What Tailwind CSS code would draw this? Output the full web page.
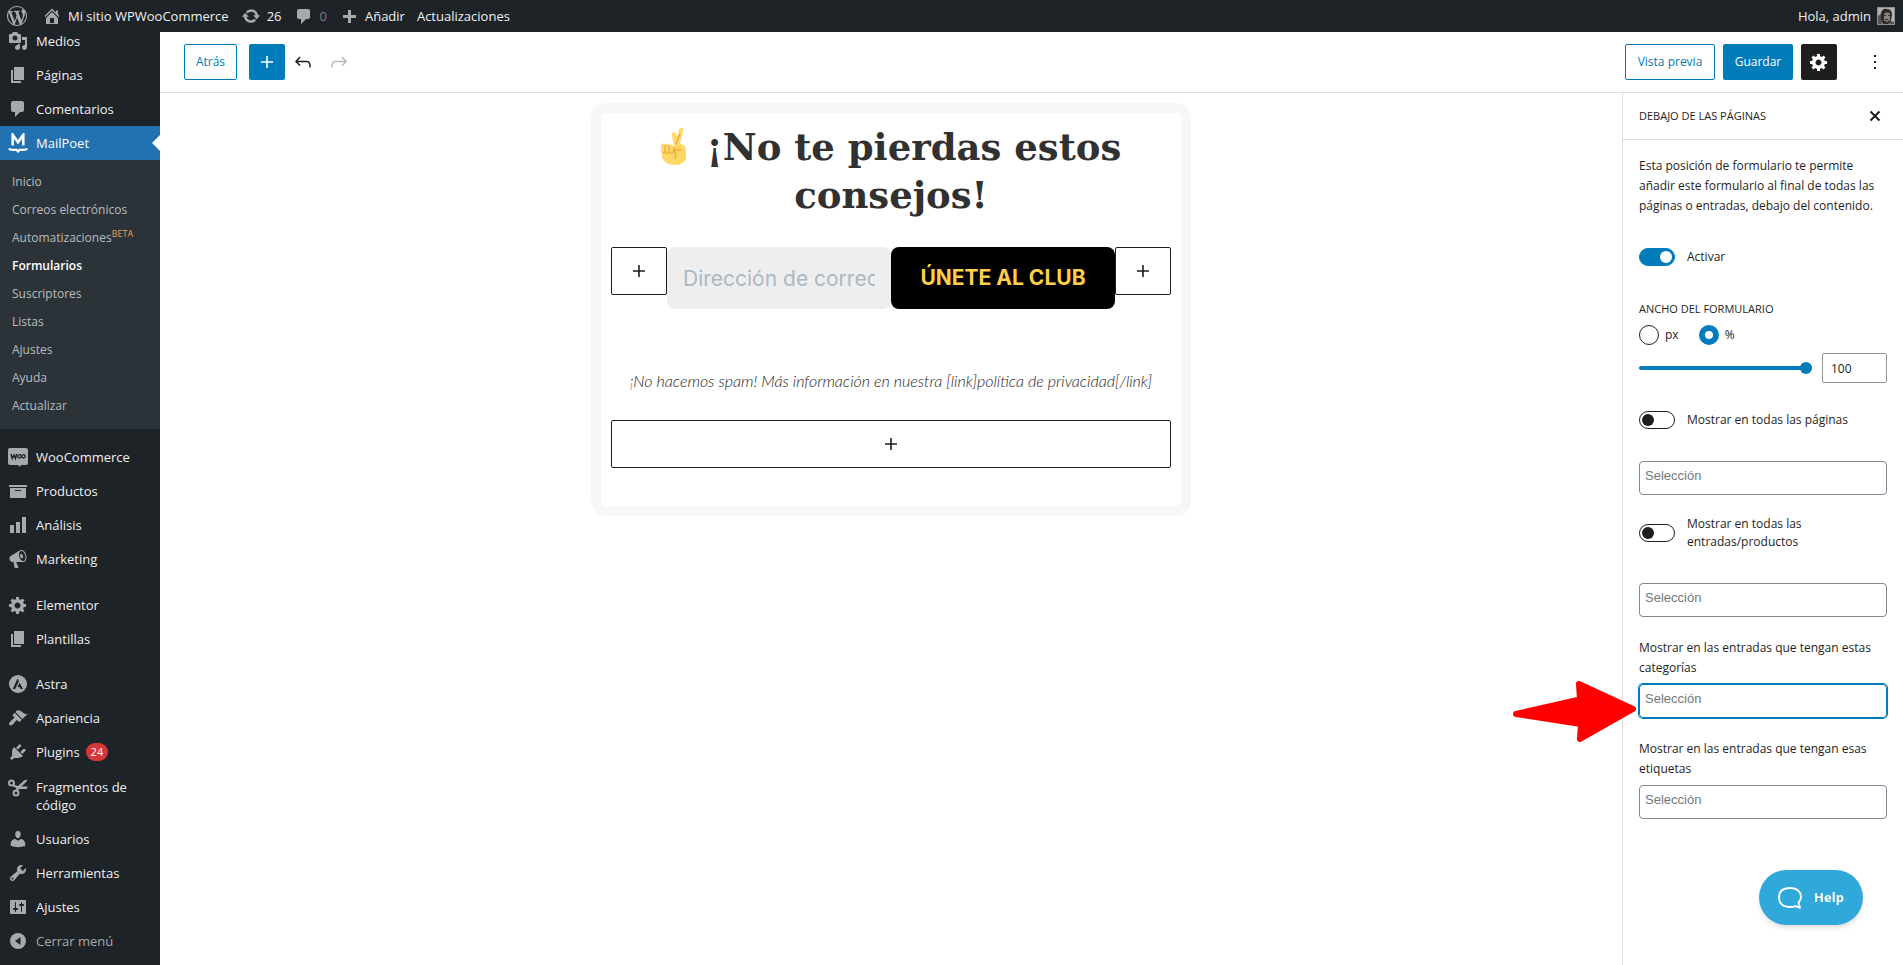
<!DOCTYPE html>
<html lang="es">
<head>
  <meta charset="UTF-8">
  <title>Formularios - MailPoet</title>
  <meta name="viewport" content="width=device-width, initial-scale=1">
  <script src="https://cdn.jsdelivr.net/npm/@tailwindcss/browser@4"></script>
</head>

<body class="h-screen flex flex-col overflow-hidden bg-white text-[#1e1e1e] text-[13px] font-['Open_Sans','Noto_Sans',sans-serif]">
  <!-- Admin bar -->
  <header class="relative z-20 h-8 shrink-0 flex items-center justify-between bg-[#1d2327] text-[#f0f0f1] pl-[7px] pr-2 leading-8">
    <nav class="flex items-center">
      <a href="#" aria-label="Acerca de WordPress" class="mr-[15px]"><svg class="size-5 fill-[#a7aaad]" viewBox="0 0 20 20"><path d="M20 10c0-5.51-4.49-10-10-10C4.48 0 0 4.49 0 10c0 5.52 4.48 10 10 10 5.51 0 10-4.48 10-10zM7.78 15.37L4.37 6.22c.55-.02 1.17-.08 1.17-.08.5-.06.44-1.13-.06-1.11 0 0-1.45.11-2.37.11-.18 0-.37 0-.58-.01C4.12 2.69 6.87 1.11 10 1.11c2.33 0 4.45.87 6.05 2.34-.68-.11-1.65.39-1.65 1.58 0 .74.45 1.36.9 2.1.35.61.55 1.36.55 2.46 0 1.49-1.4 5-1.4 5l-3.03-8.37c.54-.02.82-.17.82-.17.5-.05.44-1.25-.06-1.22 0 0-1.44.12-2.38.12-.87 0-2.33-.12-2.33-.12-.5-.03-.56 1.2-.06 1.22l.92.08 1.26 3.41zM17.41 10c.24-.64.74-1.87.43-4.25.7 1.29 1.05 2.71 1.05 4.25 0 3.29-1.73 6.24-4.4 7.78.97-2.59 1.94-5.2 2.92-7.78zM6.1 18.09C3.12 16.65 1.11 13.53 1.11 10c0-1.3.23-2.48.72-3.59C3.25 10.3 4.67 14.2 6.1 18.09zm4.03-6.63l2.58 6.98c-.86.29-1.76.45-2.71.45-.79 0-1.57-.11-2.29-.33.81-2.38 1.62-4.74 2.42-7.1z"/></svg></a>
      <a href="#" class="flex items-center gap-[6px] mr-3"><svg class="size-5 fill-[#a7aaad]" viewBox="0 0 20 20"><path d="M16 8.5l1.53 1.53-1.06 1.06L10 4.6l-6.47 6.49-1.06-1.06L10 2.5l4 4v-2h2v4zm-6-2.46l6 5.99V18H4v-5.97zM12 17v-5H8v5h4z"/></svg>Mi sitio WPWooCommerce</a>
      <a href="#" class="flex items-center gap-[6px] mr-3"><svg class="size-5 fill-[#a7aaad]" viewBox="0 0 20 20"><path d="M10.2 3.28c3.53 0 6.43 2.61 6.92 6h2.08l-3.5 4-3.5-4h2.32c-.45-1.97-2.21-3.45-4.32-3.45-1.45 0-2.73.71-3.54 1.78L4.95 5.66C6.23 4.2 8.11 3.28 10.2 3.28zm-.4 13.44c-3.52 0-6.43-2.61-6.92-6H.8l3.5-4c1.17 1.33 2.33 2.67 3.5 4H5.48c.45 1.97 2.21 3.45 4.32 3.45 1.45 0 2.73-.71 3.54-1.78l1.71 1.95c-1.28 1.46-3.15 2.38-5.25 2.38z"/></svg>26</a>
      <a href="#" class="flex items-center gap-[6px] mr-3 text-[#7b7f83]"><svg class="size-5 fill-[#a7aaad]" viewBox="0 0 20 20"><path d="M5 3h9c1.100 0 2 .9 2 2v6c0 1.100-.9 2-2 2h-2l-5 5v-5H5c-1.100 0-2-.9-2-2V5c0-1.100.9-2 2-2z"/></svg>0</a>
      <a href="#" class="flex items-center gap-[6px] mr-3"><svg class="size-5 fill-[#a7aaad]" viewBox="0 0 20 20"><path d="M17 9v3h-5v5H9v-5H4V9h5V4h3v5h5z"/></svg>Añadir</a>
      <a href="#">Actualizaciones</a>
    </nav>
    <a href="#" class="flex items-center gap-[6px]">Hola, admin
      <svg class="size-[18px]" viewBox="0 0 18 18"><path fill="#8c8f94" d="M0 0h18v18H0z"/><path fill="#b4b4b4" d="M1 1h16v16H1z"/><path fill="#555" d="M1 9l4-3v11H1zm11 4l5 2v2h-7z"/><path fill="#2b2b2b" d="M4 7c0-4 3-6 6-5 4 0 5 3 5 6l-1 5-3 4H6L4 12z"/><path fill="#858585" d="M7 7c2-2 5-2 6 0v5c-1 3-4 4-6 1z"/><path fill="#333" d="M7 8h2v1H7zm4 0h2v1h-2zM8 12h3v1H8z"/></svg>
    </a>
  </header>

  <div class="flex flex-1 min-h-0">
    <!-- Admin menu -->
    <nav class="w-40 shrink-0 -mt-2 bg-[#1d2327] text-[#f0f0f1] leading-[18px]">
      <a href="#" class="flex items-center gap-2 h-[34px] px-2"><svg class="size-5 fill-[#a7aaad]" viewBox="0 0 20 20"><path d="M13 11V4c0-.55-.45-1-1-1h-1.67L9 1H5L3.67 3H2c-.55 0-1 .45-1 1v7c0 .55.45 1 1 1h10c.55 0 1-.45 1-1zM7 4.5c1.380 0 2.500 1.120 2.500 2.500S8.380 9.500 7 9.500 4.500 8.380 4.500 7 5.620 4.500 7 4.500zM14 6h5v10.500c0 1.380-1.120 2.500-2.500 2.500S14 17.880 14 16.500s1.120-2.500 2.500-2.500c.17 0 .34.02.5.05V9h-3V6zm-4 8.050V13h2v3.500c0 1.380-1.120 2.500-2.500 2.500S7 17.880 7 16.500 8.120 14 9.500 14c.17 0 .34.02.5.05z"/></svg>Medios</a>
      <a href="#" class="flex items-center gap-2 h-[34px] px-2"><svg class="size-5 fill-[#a7aaad]" viewBox="0 0 20 20"><path d="M6 15V2h10v13H6zm-1 1h8v2H3V5h2v11z"/></svg>Páginas</a>
      <a href="#" class="flex items-center gap-2 h-[34px] px-2"><svg class="size-5 fill-[#a7aaad]" viewBox="0 0 20 20"><path d="M5 2h9c1.100 0 2 .9 2 2v7c0 1.100-.9 2-2 2h-2l-5 5v-5H5c-1.100 0-2-.9-2-2V4c0-1.100.9-2 2-2z"/></svg>Comentarios</a>
      <a href="#" class="relative flex items-center gap-2 h-[34px] px-2 bg-[#2271b1] text-white"><svg class="size-5" viewBox="0 0 20 20" fill="none" stroke="#fff"><path stroke-width="2.600" d="M4.700 12.500V1.800L10 9.300l5.300-7.500v10.700"/><path stroke-width="2.200" stroke-linecap="round" d="M1.500 16.200c3 1 5.500.4 7 .6L10 18.500l1.500-1.700c1.500-.2 4 .4 7-.6"/></svg>MailPoet
        <svg class="absolute right-0 top-[9px] w-2 h-4 fill-white" viewBox="0 0 8 16"><path d="M8 0v16L0 8z"/></svg>
      </a>
      <div class="flex flex-col pt-2 pb-[9px] bg-[#2c3338] text-[#b9bcbf] text-xs">
        <a href="#" class="px-3 leading-7">Inicio</a>
        <a href="#" class="px-3 leading-7">Correos electrónicos</a>
        <a href="#" class="px-3 leading-7 flex">Automatizaciones<span class="text-[9px] leading-5 text-[#f09b5a]">BETA</span></a>
        <a href="#" class="px-3 leading-7 font-semibold text-white">Formularios</a>
        <a href="#" class="px-3 leading-7">Suscriptores</a>
        <a href="#" class="px-3 leading-7">Listas</a>
        <a href="#" class="px-3 leading-7">Ajustes</a>
        <a href="#" class="px-3 leading-7">Ayuda</a>
        <a href="#" class="px-3 leading-7">Actualizar</a>
      </div>
      <a href="#" class="mt-[11px] flex items-center gap-2 h-[34px] px-2"><svg class="size-5" viewBox="0 0 20 20"><path fill="#a7aaad" d="M2 1h16a2 2 0 0 1 2 2v13a2 2 0 0 1-2 2h-5l-1 2-2-2H2a2 2 0 0 1-2-2V3a2 2 0 0 1 2-2z"/><path fill="none" stroke="#1d2327" stroke-width="1.400" d="M3 7l1.300 4.500L6 8l1.500 3.500L8.700 7"/><circle cx="11.500" cy="9.300" r="1.700" fill="none" stroke="#1d2327" stroke-width="1.300"/><circle cx="15.500" cy="9.300" r="1.700" fill="none" stroke="#1d2327" stroke-width="1.300"/></svg>WooCommerce</a>
      <a href="#" class="flex items-center gap-2 h-[34px] px-2"><svg class="size-5 fill-[#a7aaad]" viewBox="0 0 20 20"><path d="M19 4v2H1V4h18zM2 7h16v10H2V7zm11 3V9H7v1h6z"/></svg>Productos</a>
      <a href="#" class="flex items-center gap-2 h-[34px] px-2"><svg class="size-5 fill-[#a7aaad]" viewBox="0 0 20 20"><path d="M18 18V2h-4v16h4zm-6 0V7H8v11h4zm-6 0v-8H2v8h4z"/></svg>Análisis</a>
      <a href="#" class="flex items-center gap-2 h-[34px] px-2"><svg class="size-5 fill-[#a7aaad]" viewBox="0 0 20 20"><path d="M18.150 5.940c.46 1.620.38 3.220-.02 4.480-.42 1.280-1.260 2.180-2.300 2.480-.16.06-.26.06-.4.06-.06.02-.12.02-.18.02-.06.02-.14.02-.22.02h-6.800l2.220 5.500c.02.14-.06.26-.14.34-.08.1-.24.16-.34.16H6.950c-.1 0-.26-.06-.34-.16-.08-.08-.16-.2-.14-.34l-1-5.500H4.250l-.02-.02c-.5.06-1.080-.18-1.540-.62s-.88-1.080-1.060-1.880c-.24-.8-.2-1.560-.02-2.200.18-.62.58-1.080 1.060-1.300l.02-.02 9-5.400c.1-.06.18-.1.24-.16.06-.04.14-.08.24-.12.16-.08.28-.12.5-.18 1.040-.3 2.240.1 3.220.98s1.840 2.240 2.260 3.860zm-2.580 5.980h-.02c.4-.1.74-.34 1.040-.7.58-.7.86-1.760.86-3.040 0-.64-.1-1.300-.28-1.980-.34-1.360-1.020-2.500-1.780-3.240s-1.680-1.100-2.460-.88c-.82.22-1.400.96-1.700 2-.32 1.040-.28 2.360.06 3.720.38 1.360 1 2.500 1.800 3.240.78.74 1.620 1.100 2.480.88zm-2.540-7.080c.22-.04.42-.02.62.04.38.16.76.48 1.020 1s.42 1.200.42 1.780c0 .3-.04.56-.12.8-.18.48-.44.84-.86.94-.34.1-.8-.06-1.140-.4s-.64-.86-.78-1.500c-.18-.62-.12-1.240.02-1.720s.48-.84.82-.94z"/></svg>Marketing</a>
      <a href="#" class="mt-3 flex items-center gap-2 h-[34px] px-2"><svg class="size-5 fill-[#a7aaad]" viewBox="0 0 20 20"><path d="M18 12h-2.180c-.17.7-.44 1.350-.81 1.930l1.540 1.540-2.100 2.100-1.540-1.540c-.58.36-1.230.63-1.910.79V19H8v-2.180c-.68-.16-1.330-.43-1.910-.79l-1.540 1.540-2.120-2.120 1.540-1.540c-.36-.58-.63-1.230-.79-1.910H1V9.030h2.170c.16-.7.44-1.350.8-1.940L2.430 5.550l2.100-2.100 1.540 1.540c.58-.37 1.240-.64 1.930-.81V2h3v2.180c.68.16 1.330.43 1.910.79l1.540-1.540 2.120 2.120-1.540 1.540c.36.59.64 1.240.8 1.940H18V12zm-8.500 1.500c1.660 0 3-1.340 3-3s-1.340-3-3-3-3 1.340-3 3 1.340 3 3 3z"/></svg>Elementor</a>
      <a href="#" class="flex items-center gap-2 h-[34px] px-2"><svg class="size-5 fill-[#a7aaad]" viewBox="0 0 20 20"><path d="M6 15V2h10v13H6zm-1 1h8v2H3V5h2v11z"/></svg>Plantillas</a>
      <a href="#" class="mt-[11px] flex items-center gap-2 h-[34px] px-2"><svg class="size-5" viewBox="0 0 20 20"><circle cx="10" cy="10" r="9" fill="#a7aaad"/><path fill="#1d2327" d="M9.500 4.500l1.400 2.800L7.200 15H4.700zM11.600 8.700L15 15h-2.500l-1-2h-2z"/></svg>Astra</a>
      <a href="#" class="flex items-center gap-2 h-[34px] px-2"><svg class="size-5 fill-[#a7aaad]" viewBox="0 0 20 20"><path d="M14.480 11.060L7.410 3.990l1.500-1.500c.5-.56 2.300-.47 3.510.32 1.210.8 1.430 1.280 2.910 2.100 1.180.64 2.450 1.260 4.450.85zm-.71.71L6.700 4.700 4.930 6.470c-.39.39-.39 1.020 0 1.410l1.060 1.060c.39.39.39 1.030 0 1.420-.6.6-1.430 1.110-2.210 1.690-.35.26-.7.53-1.010.84C1.430 14.230.4 16.080 1.400 17.070c.99 1 2.840-.03 4.180-1.360.31-.31.58-.66.85-1.020.57-.78 1.080-1.610 1.690-2.210.39-.39 1.020-.39 1.410 0l1.060 1.060c.39.39 1.020.39 1.410 0z"/></svg>Apariencia</a>
      <a href="#" class="flex items-center gap-2 h-[34px] px-2"><svg class="size-5 fill-[#a7aaad]" viewBox="0 0 20 20"><path d="M13.110 4.360L9.870 7.600 8 5.730l3.240-3.240c.35-.34 1.050-.2 1.560.32.52.51.66 1.210.31 1.550zm-8 1.770l.91-1.120 9.010 9.010-1.190.84c-.71.71-2.630 1.160-3.820 1.160H6.140L4.900 17.260c-.59.59-1.540.59-2.120 0-.59-.58-.59-1.530 0-2.120l1.240-1.240v-3.880c0-1.130.4-3.190 1.090-3.890zm7.260 3.970l3.240-3.240c.34-.35 1.040-.21 1.550.31.52.51.66 1.210.31 1.550l-3.240 3.250z"/></svg>Plugins<span class="-ml-[2px] px-[5px] rounded-full bg-[#d63638] text-white text-[11px]">24</span></a>
      <a href="#" class="flex gap-2 h-[53px] px-2 pt-[9px]"><svg class="size-5 shrink-0" viewBox="0 0 20 20"><g fill="none" stroke="#a7aaad" stroke-width="2"><circle cx="3.500" cy="5" r="2.500"/><circle cx="8" cy="15" r="2.500"/></g><path fill="#a7aaad" d="M5 6.500L10 8l6-5.500c1.500-1 3-1 3.500 0l-6 6H19c1 .5.500 2.500-1 2.500h-7l-1.500 2.500-2-.8L8.500 10 5 8.500z"/></svg>Fragmentos de código</a>
      <a href="#" class="flex items-center gap-2 h-[34px] px-2"><svg class="size-5 fill-[#a7aaad]" viewBox="0 0 20 20"><path d="M10 9.250c-2.270 0-2.730-3.440-2.730-3.440C7 4.020 7.820 2 9.970 2c2.160 0 2.980 2.020 2.710 3.810 0 0-.41 3.440-2.680 3.440zm0 2.570L12.720 10c2.390 0 4.520 2.330 4.520 4.530v2.490s-3.650 1.130-7.240 1.130c-3.650 0-7.240-1.130-7.240-1.130v-2.490c0-2.250 1.940-4.480 4.470-4.480z"/></svg>Usuarios</a>
      <a href="#" class="flex items-center gap-2 h-[34px] px-2"><svg class="size-5 fill-[#a7aaad]" viewBox="0 0 20 20"><path d="M16.680 9.770c-1.340 1.340-3.300 1.670-4.950.99l-5.410 6.520c-.99.99-2.590.99-3.580 0s-.99-2.590 0-3.570l6.520-5.420c-.68-1.650-.35-3.610.99-4.950 1.280-1.280 3.120-1.620 4.720-1.060l-2.890 2.890 2.820 2.820 2.860-2.870c.53 1.580.18 3.390-1.080 4.650zM3.810 16.210c.4.39 1.040.39 1.430 0 .4-.4.4-1.040 0-1.430-.39-.4-1.030-.4-1.430 0-.39.39-.39 1.030 0 1.430z"/></svg>Herramientas</a>
      <a href="#" class="flex items-center gap-2 h-[34px] px-2"><svg class="size-5 fill-[#a7aaad]" viewBox="0 0 20 20"><path d="M18 16V4c0-.55-.45-1-1-1H3c-.55 0-1 .45-1 1v12c0 .55.45 1 1 1h14c.55 0 1-.45 1-1zM8 11h1c.55 0 1 .45 1 1s-.45 1-1 1H8v1.500c0 .28-.22.5-.5.5s-.5-.22-.5-.5V13H6c-.55 0-1-.45-1-1s.45-1 1-1h1V5.500c0-.28.22-.5.5-.5s.5.22.5.5V11zm5-2h-1c-.55 0-1-.45-1-1s.45-1 1-1h1V5.500c0-.28.22-.5.5-.5s.5.22.5.5V7h1c.55 0 1 .45 1 1s-.45 1-1 1h-1v5.500c0 .28-.22.5-.5.5s-.5-.22-.5-.5V9z"/></svg>Ajustes</a>
      <button type="button" class="flex items-center gap-2 h-[34px] w-full px-2 text-[#a7aaad]"><svg class="size-5" viewBox="0 0 20 20"><circle cx="10" cy="10" r="8" fill="#a7aaad"/><path fill="#1d2327" d="M12.500 6v8L7 10z"/></svg>Cerrar menú</button>
    </nav>

    <!-- Editor -->
    <div class="flex-1 min-w-0 flex flex-col">
      <div class="h-[61px] shrink-0 flex items-center justify-between border-b border-[#ddd] pl-6 pr-4">
        <div class="flex items-center">
          <button type="button" class="h-9 w-[53px] mr-3 border border-[#007cba] rounded-[2px] text-[#007cba] text-xs">Atrás</button>
          <button type="button" aria-label="Añadir bloque" class="size-9 flex items-center justify-center bg-[#007cba] rounded-[2px]"><svg class="size-6 fill-white" viewBox="0 0 24 24"><path d="M18 11.200h-5.200V6h-1.600v5.200H6v1.600h5.200V18h1.600v-5.200H18z"/></svg></button>
          <button type="button" aria-label="Deshacer" class="size-9 flex items-center justify-center"><svg class="size-6 fill-[#1e1e1e]" viewBox="0 0 24 24"><path d="M18.300 11.700c-.6-.6-1.400-.9-2.300-.9H6.700l2.900-3.300-1.100-1-4.500 5L8.500 16l1-1-2.700-2.700H16c.5 0 .9.2 1.300.5 1 1 1 3.400 1 4.500v.3h1.500v-.2c0-1.500 0-4.300-1.500-5.700z"/></svg></button>
          <button type="button" aria-label="Rehacer" class="size-9 flex items-center justify-center"><svg class="size-6 fill-[#bbb]" viewBox="0 0 24 24"><path d="M15.600 6.500l-1.100 1 2.900 3.300H8c-.9 0-1.700.3-2.300.9-1.400 1.500-1.400 4.200-1.400 5.600v.2h1.500v-.3c0-1.100 0-3.500 1-4.500.3-.3.7-.5 1.300-.5h9.200L14.500 15l1.100 1.100 4.600-4.600-4.600-5z"/></svg></button>
        </div>
        <div class="flex items-center gap-2">
          <button type="button" class="h-9 w-[90px] border border-[#007cba] rounded-[2px] text-[#007cba] text-xs">Vista previa</button>
          <button type="button" class="h-9 w-[70px] bg-[#007cba] rounded-[2px] text-white text-xs font-medium">Guardar</button>
          <button type="button" aria-label="Ajustes" class="size-9 flex items-center justify-center bg-[#1e1e1e] rounded-[2px]"><svg class="size-5 fill-white" viewBox="0 0 20 20"><path d="M18 12h-2.180c-.17.7-.44 1.350-.81 1.930l1.540 1.540-2.100 2.100-1.540-1.540c-.58.36-1.230.63-1.910.79V19H8v-2.180c-.68-.16-1.330-.43-1.910-.79l-1.540 1.540-2.120-2.120 1.540-1.540c-.36-.58-.63-1.230-.79-1.910H1V9.030h2.170c.16-.7.44-1.350.8-1.940L2.430 5.550l2.100-2.100 1.540 1.540c.58-.37 1.240-.64 1.930-.81V2h3v2.180c.68.16 1.330.43 1.910.79l1.540-1.540 2.120 2.120-1.540 1.540c.36.59.64 1.240.8 1.940H18V12zm-8.500 1.500c1.660 0 3-1.340 3-3s-1.340-3-3-3-3 1.340-3 3 1.340 3 3 3z"/></svg></button>
          <button type="button" aria-label="Opciones" class="ml-[18px] size-6"><svg class="size-6 fill-[#1e1e1e]" viewBox="0 0 24 24"><path d="M11 5h2v2h-2zm0 6h2v2h-2zm0 6h2v2h-2z"/></svg></button>
        </div>
      </div>

      <div class="flex flex-1 min-h-0">
        <!-- Form canvas -->
        <main class="flex-1 min-w-0 pt-[10px]">
          <section class="mx-auto w-full max-w-[600px] border-10 border-[#f7f7f7] rounded-[15px] px-[10px] pt-[10px] pb-[38px]">
            <h1 class="text-center text-[#313131] font-bold text-[37px] leading-12 font-['DejaVu_Serif',serif]">
              <svg class="inline-block w-[25px] h-[37px] mr-2 -mt-2" viewBox="0 0 25 37"><path fill="#ffd764" d="M13 19L11 7c-.5-3 3-4 4-1l1 3 2-7c1-3 5-2.500 4 1l-3 13c4 0 6 3 6 7v6c0 5-5 8-11 8S2 34 1 29l-1-11c0-3 3-3 4-1 0-2 3-2 4 0 1-1 4 0 5 2z"/><path fill="none" stroke="#e99a3d" stroke-width="1" d="M4 17v7m4-7v7m-7-1c0 2 3 2 3 1 1 2 4 2 4 0 1 2 5 2 5-1v-4M15 16l4-10M12 22h8M12 23c4 1 3 4 2 8"/></svg>
              ¡No te pierdas estos consejos!
            </h1>
            <div class="mt-7 flex items-start">
              <button type="button" aria-label="Añadir bloque" class="flex-1 h-12 flex items-center justify-center border border-[#1e1e1e] rounded-[2px]"><svg class="size-6 fill-[#1e1e1e]" viewBox="0 0 24 24"><path d="M18 11.200h-5.200V6h-1.600v5.200H6v1.600h5.200V18h1.600v-5.200H18z"/></svg></button>
              <input type="email" aria-label="Dirección de correo electrónico" placeholder="Dirección de correo electrónico" class="w-2/5 h-[62px] px-4 bg-[#eee] rounded-lg text-[21px] font-['Inter',sans-serif] placeholder:text-[#abb8c3]">
              <button type="button" class="w-2/5 h-[62px] bg-black rounded-lg text-[#ffcf4b] text-[21px] font-bold font-['Inter',sans-serif]">ÚNETE AL CLUB</button>
              <button type="button" aria-label="Añadir bloque" class="flex-1 h-12 flex items-center justify-center border border-[#1e1e1e] rounded-[2px]"><svg class="size-6 fill-[#1e1e1e]" viewBox="0 0 24 24"><path d="M18 11.200h-5.200V6h-1.600v5.200H6v1.600h5.200V18h1.600v-5.200H18z"/></svg></button>
            </div>
            <p class="mt-[62px] text-center text-base leading-5 font-light italic whitespace-nowrap font-['Lato',sans-serif]">¡No hacemos spam! Más información en nuestra [link]política de privacidad[/link]</p>
            <button type="button" aria-label="Añadir bloque" class="mt-[29px] w-full h-12 flex items-center justify-center border border-[#1e1e1e] rounded-[2px]"><svg class="size-6 fill-[#1e1e1e]" viewBox="0 0 24 24"><path d="M18 11.200h-5.200V6h-1.600v5.200H6v1.600h5.200V18h1.600v-5.200H18z"/></svg></button>
          </section>
        </main>

        <!-- Placement settings -->
        <aside class="w-[281px] shrink-0 border-l border-[#ddd] leading-5">
          <div class="h-[47px] flex items-center justify-between border-b border-[#ddd] px-4">
            <h2 class="text-[11px] font-medium uppercase">Debajo de las páginas</h2>
            <button type="button" aria-label="Cerrar" class="size-6"><svg class="size-6" viewBox="0 0 24 24" fill="none" stroke="#1e1e1e" stroke-width="2"><path d="M7.500 7.500l9 9m0-9l-9 9"/></svg></button>
          </div>
          <div class="px-4 pt-4 text-xs leading-5">
            <p>Esta posición de formulario te permite añadir este formulario al final de todas las páginas o entradas, debajo del contenido.</p>
            <label class="mt-8 flex items-center gap-3 leading-[18px]">
              <input type="checkbox" checked class="appearance-none w-9 h-[18px] shrink-0 rounded-full border border-[#1e1e1e] p-[2px] flex before:size-3 before:rounded-full before:bg-[#1e1e1e] checked:bg-[#007cba] checked:border-[#007cba] checked:justify-end checked:before:bg-white">
              Activar
            </label>
            <h3 class="mt-[33px] text-[11px] font-medium uppercase">Ancho del formulario</h3>
            <div class="mt-[6px] flex gap-5">
              <label class="flex items-center gap-[6px]"><input type="radio" name="unit" class="appearance-none size-5 rounded-full border border-[#1e1e1e] checked:border-6 checked:border-[#007cba]">px</label>
              <label class="flex items-center gap-[6px]"><input type="radio" name="unit" checked class="appearance-none size-5 rounded-full border border-[#1e1e1e] checked:border-6 checked:border-[#007cba]">%</label>
            </div>
            <div class="mt-2 flex items-center gap-[10px]">
              <input type="range" min="0" max="100" value="100" aria-label="Ancho" class="appearance-none flex-1 min-w-0 h-1 rounded-full bg-[#007cba] [&::-webkit-slider-thumb]:appearance-none [&::-webkit-slider-thumb]:size-3 [&::-webkit-slider-thumb]:rounded-full [&::-webkit-slider-thumb]:bg-[#007cba]">
              <input type="text" value="100" aria-label="Ancho en porcentaje" class="w-[65px] h-[30px] px-2 border border-[#949494] rounded-[2px] text-xs">
            </div>
            <label class="mt-7 flex items-center gap-3 leading-[18px]">
              <input type="checkbox" class="appearance-none w-9 h-[18px] shrink-0 rounded-full border border-[#1e1e1e] p-[2px] flex before:size-3 before:rounded-full before:bg-[#1e1e1e]">
              Mostrar en todas las páginas
            </label>
            <input type="text" placeholder="Selección" aria-label="Páginas" class="mt-8 w-full h-[34px] px-[5px] pb-[6px] border border-[#7e8993] rounded-[4px] text-[13px] font-['Liberation_Sans',sans-serif] placeholder:text-[#72777c]">
            <label class="mt-5 flex items-center gap-3 leading-[18px]">
              <input type="checkbox" class="appearance-none w-9 h-[18px] shrink-0 rounded-full border border-[#1e1e1e] p-[2px] flex before:size-3 before:rounded-full before:bg-[#1e1e1e]">
              <span>Mostrar en todas las<br>entradas/productos</span>
            </label>
            <input type="text" placeholder="Selección" aria-label="Entradas y productos" class="mt-8 w-full h-[34px] px-[5px] pb-[6px] border border-[#7e8993] rounded-[4px] text-[13px] font-['Liberation_Sans',sans-serif] placeholder:text-[#72777c]">
            <label for="categorias" class="mt-[21px] block">Mostrar en las entradas que tengan estas categorías</label>
            <div class="relative mt-[6px]">
              <input id="categorias" autofocus type="text" placeholder="Selección" class="block w-full h-[34px] px-[5px] pb-[6px] border border-[#007cba] ring-1 ring-[#007cba] outline-none rounded-[4px] text-[13px] font-['Liberation_Sans',sans-serif] placeholder:text-[#72777c]">
              <!-- Pointer arrow -->
              <svg class="absolute right-full top-0 -mt-1 mr-[2px] w-[125px] h-[62px] fill-[#f00]" viewBox="0 0 125 62"><path stroke="#f00" stroke-width="6" stroke-linejoin="round" d="M4 34l64-14.500L67 4l54 25-53 30 1-15z"/></svg>
            </div>
            <label for="etiquetas" class="mt-[21px] block">Mostrar en las entradas que tengan esas etiquetas</label>
            <input id="etiquetas" type="text" placeholder="Selección" class="mt-[6px] w-full h-[34px] px-[5px] pb-[6px] border border-[#7e8993] rounded-[4px] text-[13px] font-['Liberation_Sans',sans-serif] placeholder:text-[#72777c]">
          </div>
        </aside>
      </div>
    </div>
  </div>

  <!-- Help launcher -->
  <button type="button" class="fixed right-10 bottom-10 h-[55px] w-[104px] flex items-center justify-center gap-3 rounded-full bg-[#31a8da] text-white text-[13px] font-bold shadow-md">
    <svg class="size-6" viewBox="0 0 24 24" fill="none" stroke="#fff" stroke-width="1.800" stroke-linejoin="round"><path d="M20.500 16.500c1.500-1.500 2.500-3.500 2.500-5.500C23 5.500 19 2 12 2S1 5.500 1 11.500 5 21 12 21c2 0 4-.4 5.500-.9L22 21.800z"/></svg>Help
  </button>
</body>
</html>
